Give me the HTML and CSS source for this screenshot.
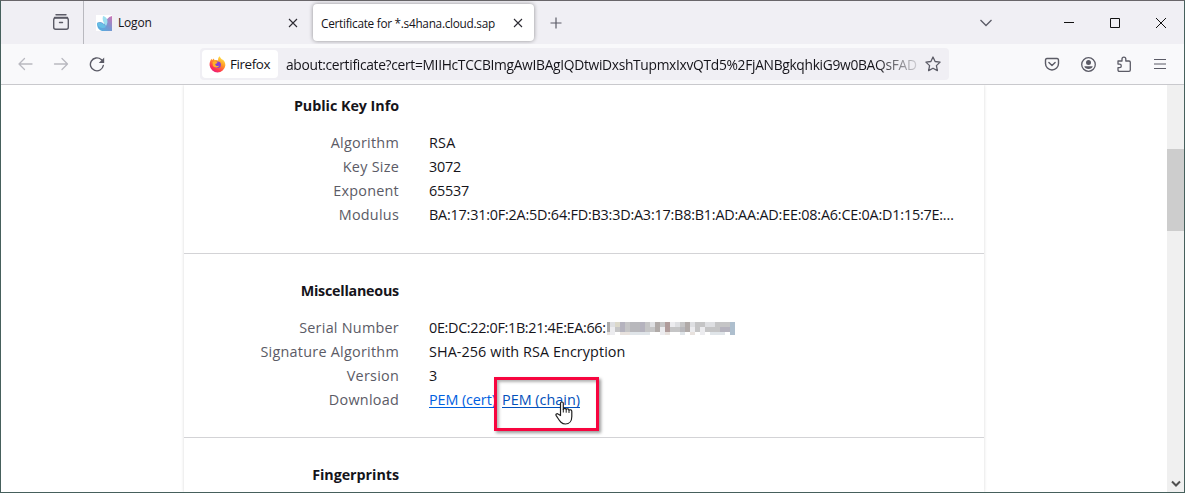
FILE: index.html
```html
<!DOCTYPE html>
<html lang="en">
<head>
<meta charset="utf-8">
<title>Certificate for *.s4hana.cloud.sap</title>
<link rel="stylesheet" href="styles.css">
</head>
<body>
<div class="window">
  <header class="tabbar">
    <div class="view"><svg width="18" height="18" viewBox="0 0 18 18" fill="none" stroke="#5b5b66" stroke-width="1.4" stroke-linecap="round"><path d="M4 1.700h10M2.500 4.500h13"/><path d="M1.700 7q0-2 2-2h10.600q2 0 2 2v7.300q0 2-2 2H3.700q-2 0-2-2zM7.500 9.500h3"/></svg></div>
    <div class="tab">
      <svg width="16" height="16" viewBox="0 0 16 16"><defs><linearGradient id="petal" x1="1" y1="0" x2="0" y2="1"><stop offset="0" stop-color="#cf72b5"/><stop offset=".5" stop-color="#7598d2"/><stop offset="1" stop-color="#4ab4e4"/></linearGradient></defs><path fill="#fff" d="M0 0h16v16H0z"/><path fill="url(#petal)" d="M16 1v15H6C3 15 1 13 1 8c3-2 5-1 7 1 2-4 4-7 8-8z"/><path fill="#9cdff0" d="M7 1c4 1 6 5 3 10C7 8 6 4 7 1z"/><path fill="#66bfe5" d="M1 8c3-1 7 0 9 4-3 2-8 1-9-4z"/></svg>
      <span class="t-logon">Logon</span>
      <svg class="close" width="10" height="10" viewBox="0 0 10 10"><path d="m1 1 8 8m0-8L1 9"/></svg>
    </div>
    <div class="tab active">
      <span class="t-cert">Certificate for *.s4hana.cloud.sap</span>
      <svg class="close" width="10" height="10" viewBox="0 0 10 10"><path d="m1 1 8 8m0-8L1 9"/></svg>
    </div>
    <svg class="plus" width="12" height="12" viewBox="0 0 12 12" fill="none" stroke="#5b5b66" stroke-width="1.200"><path d="M6 .5v11M.5 6h11"/></svg>
    <div class="controls">
      <svg width="12" height="8" viewBox="0 0 12 8" fill="none" stroke="#5b5b66" stroke-width="1.300"><path d="m.5 1 5.500 5.500L11.500 1"/></svg>
      <svg width="10" height="10" viewBox="0 0 10 10"><path fill="#111" d="M0 4h10v1H0z"/></svg>
      <svg width="10" height="10" viewBox="0 0 10 10" fill="none" stroke="#111"><path d="M.5.5h9v9h-9z"/></svg>
      <svg width="10" height="10" viewBox="0 0 10 10" stroke="#111"><path d="m0 0 10 10M10 0 0 10"/></svg>
    </div>
  </header>
  <nav class="toolbar">
    <div class="nav">
      <svg width="16" height="16" viewBox="0 0 16 16" fill="none" stroke="#b9b9c0" stroke-width="1.300" stroke-linecap="round" stroke-linejoin="round"><path d="M15 8H2M7.500 2.500 2 8l5.500 5.500"/></svg>
      <svg width="16" height="16" viewBox="0 0 16 16" fill="none" stroke="#b9b9c0" stroke-width="1.300" stroke-linecap="round" stroke-linejoin="round"><path d="M1.500 8h13M9 2.500 14.500 8 9 13.500"/></svg>
      <svg width="16" height="16" viewBox="0 0 16 16" fill="none" stroke="#5b5b66" stroke-width="1.400" stroke-linecap="round"><path d="M14.300 9.500A6.500 6.500 0 1 1 12.200 3.500l2 2"/><path fill="#5b5b66" stroke="none" d="M15.200 1.500v5.400H9.800z"/></svg>
    </div>
    <div class="urlbar">
      <div class="identity">
        <svg width="17" height="17" viewBox="0 0 17 17"><defs><linearGradient id="flame" x1=".8" y1="0" x2=".2" y2="1"><stop offset="0" stop-color="#fff04f"/><stop offset=".4" stop-color="#ff9a24"/><stop offset=".75" stop-color="#ff3750"/><stop offset="1" stop-color="#e31587"/></linearGradient></defs><path fill="url(#flame)" d="M10.500.2c1 1.400 1.300 2.300 2.500 3.200l1 .300c1.700 1.700 2.600 3.800 2.300 6a7.900 7.900 0 0 1-15.600.100C.3 7.300 1 5 2.400 2.800l.8 1.400L4.500 2.500l1.200 1.800c1.600-.5 3-.1 3.500.2-.3-1.500.1-3 1.300-4.300z"/><circle cx="8.600" cy="8.700" r="3.300" fill="#8240d4"/><path fill="#ffb127" d="M3.500 6c2-1.300 3.500-.6 5 .5-.3 1-1.600 1.100-2.300 1.700.3 1.800 2.300 2.300 4 1.200-.8 2.600-4.800 2.900-6.300.4z"/></svg>
        <span class="t-firefox">Firefox</span>
      </div>
      <span class="url">about:certificate?cert=MIIHcTCCBImgAwIBAgIQDtwiDxshTupmxIxvQTd5%2FjANBgkqhkiG9w0BAQsFAD</span>
      <svg width="16" height="16" viewBox="0 0 16 16" fill="none" stroke="#5b5b66" stroke-width="1.300" stroke-linejoin="round"><path d="m8 1 2.100 4.500 5 .6-3.700 3.500 1 5L8 12.200l-4.400 2.400 1-5L.9 6.100l5-.6z"/></svg>
    </div>
    <div class="tools">
      <svg width="16" height="16" viewBox="0 0 16 16" fill="none" stroke="#5b5b66" stroke-width="1.400" stroke-linecap="round" stroke-linejoin="round"><path d="M3 2.500h10q1.500 0 1.500 2v3a6.500 6.500 0 0 1-13 0v-3q0-2 1.500-2z"/><path d="m4.900 6.500 3.100 3 3.100-3"/></svg>
      <svg width="16" height="16" viewBox="0 0 16 16"><circle cx="8.500" cy="8.500" r="6.800" fill="none" stroke="#5b5b66" stroke-width="1.300"/><circle cx="8.500" cy="6.400" r="2.500" fill="#5b5b66"/><path fill="#5b5b66" d="M4.300 10.300h8.400c-.5 2-2 2.700-4.200 2.700s-3.700-.7-4.200-2.700z"/></svg>
      <svg width="16" height="17" viewBox="0 0 16 17" fill="none" stroke="#5b5b66" stroke-width="1.300" stroke-linejoin="round"><path d="M2 5h4V3a1.900 1.900 0 0 1 3.800 0v2H13q1.300 0 1.300 1.300V14q0 1.300-1.300 1.300H3.300Q2 15.300 2 14v-2.300h1.500a1.800 1.800 0 0 0 0-3.600H2z"/></svg>
      <svg width="12" height="12" viewBox="0 0 12 12" stroke="#5b5b66" stroke-width="1.200"><path d="M0 1.500h12M0 6h12M0 10.500h12"/></svg>
    </div>
  </nav>
  <main class="page">
    <div class="card">
      <section>
        <h2>Public Key Info</h2>
        <dl>
          <dt>Algorithm</dt><dd class="v-rsa">RSA</dd>
          <dt>Key Size</dt><dd class="tight">3072</dd>
          <dt>Exponent</dt><dd class="tight">65537</dd>
          <dt>Modulus</dt><dd class="tight">BA:17:31:0F:2A:5D:64:FD:B3:3D:A3:17:B8:B1:AD:AA:AD:EE:08:A6:CE:0A:D1:15:7E:…</dd>
        </dl>
      </section>
      <section>
        <h2 class="h-misc">Miscellaneous</h2>
        <dl>
          <dt>Serial Number</dt>
          <dd class="serial"><span class="v-serial">0E:DC:22:0F:1B:21:4E:EA:66:</span><svg width="130" height="13" viewBox="0 0 130 13" shape-rendering="crispEdges">
            <path fill="#aaa9a9" d="M0 0h3v10H0z"/><path fill="#c5c5c6" d="M3 0h120v10H3z"/>
            <path fill="#dedfe2" d="M3 0h5v5H3zM43 0h10v5H43zM68 0h5v5h-5zM83 0h5v5h-5zM98 0h10v5H98z"/>
            <path fill="#b5b3be" d="M13 0h5v10h-5zM33 0h5v10h-5zM113 5h10v5h-10z"/><path fill="#b8b8bc" d="M23 0h10v10H23zM73 5h10v5H73z"/>
            <path fill="#b0aaa8" d="M48 0h5v10h-5zM78 0h5v10h-5z"/><path fill="#b09c9b" d="M58 0h5v10h-5z"/><path fill="#dbd8ca" d="M8 0h5v5H8z"/>
            <path fill="#ececef" d="M3 5h5v8H3zM53 5h5v8h-5zM63 0h5v5h-5zM93 5h5v8h-5zM83 5h5v5h-5z"/><path fill="#e8e2de" d="M0 10h3v3H0zM13 10h10v3H13zM58 10h5v3h-5zM83 10h5v3h-5z"/>
            <path fill="#e0e5e9" d="M23 10h20v3H23zM73 10h5v3h-5zM103 10h15v3h-15z"/><path fill="#aebfce" d="M123 0h5v13h-5z"/>
          </svg></dd>
          <dt>Signature Algorithm</dt><dd class="v-sha">SHA-256 with RSA Encryption</dd>
          <dt>Version</dt><dd>3</dd>
          <dt>Download</dt>
          <dd class="links"><a href="#" class="l-cert">PEM (cert)</a><a href="#" class="chain">PEM (chain)</a><span class="highlight"></span>
            <svg class="cursor" width="18" height="24" viewBox="0 0 18 24"><path fill="#fff" stroke="#202020" stroke-width="1.200" stroke-linejoin="round" d="M5.500 14.500V2.200C5.500.6 8.300.6 8.300 2.200v6.300C9 6.900 11.200 7.300 11.200 8.500 12 7.200 14 7.700 14 9.200c1-.9 2.800-.4 2.800 1.200v5c0 4.500-2.500 7.600-6.300 7.600-4.800 0-6.100-3.700-9.300-8.400-.9-1.400.8-2.400 1.800-1.700z"/><path stroke="#202020" d="M8.300 8v3.500m2.900-3v3.200M14 9.200V12"/></svg>
          </dd>
        </dl>
      </section>
      <section><h2>Fingerprints</h2></section>
    </div>
    <aside class="scrollbar"><div class="thumb"></div><svg width="10" height="8" viewBox="0 0 10 8" fill="none" stroke="#505050" stroke-width="2"><path d="M1 1.500 5 5.500l4-4"/></svg></aside>
  </main>
</div>
</body>
</html>
```
FILE: styles.css
```css
* { box-sizing: border-box; }
body { margin: 0; width: 1185px; height: 493px; overflow: hidden; font-family: "Open Sans", "Noto Sans", sans-serif; color: #15141a; }
svg { display: block; flex: none; }
.window { height: 493px; display: flex; flex-direction: column; border: 1px solid #46605c; border-top-color: #69666a; background: #fff; }
.tabbar { height: 43px; flex: none; display: flex; align-items: center; background: #f0eff4; font-size: 12px; white-space: nowrap; }
.view { width: 83px; height: 43px; border-right: 1px solid #b9b9bf; padding: 12px 0 0 51px; }
.tab { height: 37px; display: flex; align-items: center; }
.tab:not(.active) { width: 225px; padding: 0 11px 0 12px; margin-right: 4px; gap: 6px; }
.active { width: 221px; padding: 0 11px 0 8px; background: #fff; border-radius: 4px; box-shadow: 0 0 4px rgba(0,0,0,.4); }
.t-logon { letter-spacing: -.2px; }
.t-cert { font-size: 11.8px; letter-spacing: -.28px; }
.close { margin-left: auto; stroke: #2c2b33; stroke-width: 1.1; }
.plus { margin-left: 16px; }
.controls { margin-left: auto; display: flex; align-items: center; padding-right: 18px; gap: 36px; }
.controls svg:first-child { margin-right: 36px; }
.toolbar { height: 41px; flex: none; display: flex; align-items: center; background: #f9f9fb; border-bottom: 1px solid #c9c9cd; }
.nav { display: flex; gap: 20px; width: 199px; padding-left: 16px; }
.urlbar { width: 749px; height: 32px; display: flex; align-items: center; padding: 2px 8px 2px 2px; background: #f0eff4; border-radius: 4px; font-size: 13.8px; letter-spacing: -.31px; white-space: nowrap; }
.identity { width: 76px; height: 28px; display: flex; align-items: center; gap: 4px; padding-left: 7px; background: #fff; border-radius: 4px; flex: none; }
.t-firefox { font-size: 13.4px; letter-spacing: -.4px; }
.url { width: 632px; margin: 0 8px; -webkit-mask-image: linear-gradient(90deg, #000 590px, transparent 638px); mask-image: linear-gradient(90deg, #000 590px, transparent 638px); }
.tools { margin-left: auto; display: flex; align-items: center; gap: 20px; padding-right: 18px; }
.tools svg:last-child { margin-left: 2px; }
.page { flex: 1; min-height: 0; display: flex; justify-content: space-between; overflow: hidden; }
.card { width: 800px; margin-left: 183px; box-shadow: 0 0 3px rgba(0,0,0,.16); font-size: 14.4px; line-height: 24px; }
section { height: 184px; padding-top: 25px; border-top: 1px solid #d3d3d6; }
section:first-child { height: 168px; padding-top: 9px; border-top: 0; }
section:last-child { height: 80px; }
h2 { margin: 0 0 13px; width: 215px; text-align: right; font-size: 14.3px; letter-spacing: -.03px; line-height: 24px; font-weight: 700; white-space: nowrap; }
.h-misc { letter-spacing: -.23px; }
dl { display: grid; grid-template-columns: 215px 1fr; column-gap: 30px; grid-auto-rows: 24px; margin: 0; }
dt { text-align: right; color: #5b5b66; letter-spacing: .25px; white-space: nowrap; }
dd { margin: 0; white-space: nowrap; }
.tight { letter-spacing: -.21px; }
.v-rsa { letter-spacing: .2px; }
.v-sha { letter-spacing: .07px; }
.serial { display: flex; align-items: center; }
.v-serial { width: 178px; letter-spacing: -.33px; }
.links { position: relative; display: flex; }
a { color: #0060df; text-decoration: underline; text-underline-offset: 2px; }
.l-cert { width: 73px; letter-spacing: -.1px; }
.chain { color: #0250bb; }
.highlight { position: absolute; left: 65px; top: -11px; width: 105px; height: 54px; border: 3px solid #f7053f; box-shadow: 2px 2px 3px rgba(0,0,0,.4), inset 2px 2px 3px rgba(0,0,0,.3); }
.cursor { position: absolute; left: 126px; top: 13px; }
.scrollbar { width: 17px; display: flex; flex-direction: column; align-items: center; background: #f0f0f0; padding: 64px 0 4px; }
.thumb { width: 17px; height: 82px; background: #cdcdcd; }
.scrollbar svg { margin-top: auto; }
```
